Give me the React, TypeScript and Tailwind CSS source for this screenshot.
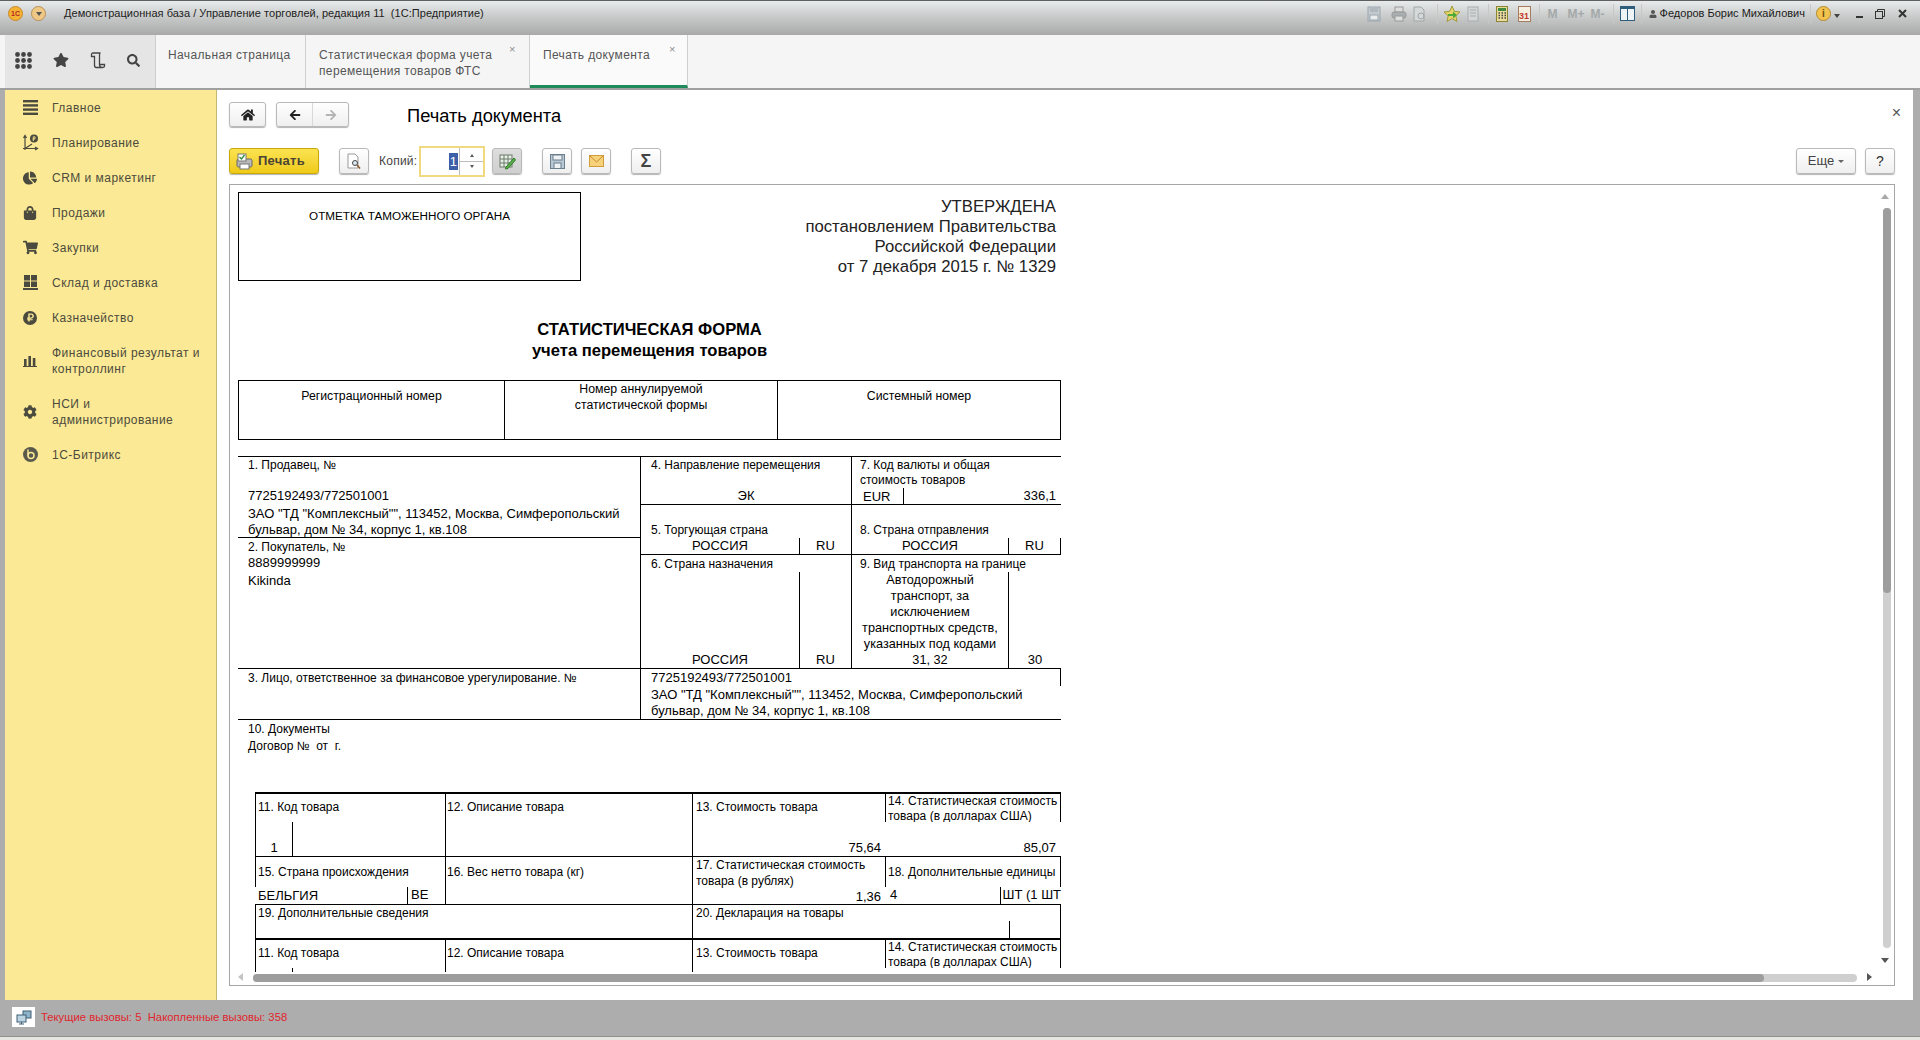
import type { ReactNode } from 'react'
import {
  FaChartPie,
  FaCog,
  FaHome,
  FaArrowLeft,
  FaArrowRight,
  FaRubleSign,
  FaSearch,
  FaShoppingBag,
  FaShoppingCart,
  FaStar,
  FaUser,
} from 'react-icons/fa'

const Line = ({ children, className = '' }: { children?: ReactNode; className?: string }) => (
  <div className={`h-4 leading-4 whitespace-nowrap ${className}`}>{children}</div>
)

const BarsIcon = () => (
  <svg width="15" height="15" viewBox="0 0 15 15" fill="#4a4a3e">
    <rect x="0" y="0" width="15" height="2.4" />
    <rect x="0" y="4.2" width="15" height="2.4" />
    <rect x="0" y="8.4" width="15" height="2.4" />
    <rect x="0" y="12.6" width="15" height="2.4" />
  </svg>
)

const PlanIcon = () => (
  <svg width="17" height="17" viewBox="0 0 17 17" fill="none" stroke="#4a4a3e" strokeWidth="1.2">
    <path d="M3 16V2M1.5 4L3 1.5L4.5 4M1 14.5H15M13 13L15.5 14.5L13 16M3 14.5L10 10" />
    <circle cx="12" cy="4.5" r="4" fill="#4a4a3e" stroke="none" />
    <path d="M11.3 7V2.8H13V5H10.6" stroke="#fbe995" strokeWidth="0.9" />
  </svg>
)

const WarehouseIcon = () => (
  <svg width="15" height="15" viewBox="0 0 15 15" fill="#4a4a3e">
    <rect x="1" y="0" width="6" height="5.5" />
    <rect x="8" y="0" width="6" height="5.5" />
    <rect x="1" y="6.5" width="6" height="5.5" />
    <rect x="8" y="6.5" width="6" height="5.5" />
    <rect x="0" y="13" width="15" height="2" />
  </svg>
)

const ChartIcon = () => (
  <svg width="14" height="12" viewBox="0 0 14 12" fill="#4a4a3e">
    <rect x="1" y="4" width="2.6" height="7" />
    <rect x="5.4" y="1" width="2.6" height="10" />
    <rect x="9.8" y="3" width="2.6" height="8" />
    <rect x="0" y="11" width="14" height="1" />
  </svg>
)

const BitrixIcon = () => (
  <svg width="15" height="15" viewBox="0 0 15 15">
    <circle cx="7.5" cy="7.5" r="7.5" fill="#5a5a4c" />
    <circle cx="8" cy="8.5" r="3" fill="none" stroke="#fbe995" strokeWidth="1.5" />
    <path d="M5 2.5V8.5" stroke="#fbe995" strokeWidth="1.5" />
  </svg>
)

const RubleBadge = () => (
  <span className="w-[14px] h-[14px] rounded-full bg-[#4a4a3e] flex items-center justify-center">
    <FaRubleSign size={9} color="#fbe995" />
  </span>
)

const navItems: { label: ReactNode; icon: ReactNode; h: string }[] = [
  { label: 'Главное', icon: <BarsIcon />, h: 'h-[35px]' },
  { label: 'Планирование', icon: <PlanIcon />, h: 'h-[35px]' },
  { label: 'CRM и маркетинг', icon: <FaChartPie size={14} color="#4a4a3e" />, h: 'h-[35px]' },
  { label: 'Продажи', icon: <FaShoppingBag size={14} color="#4a4a3e" />, h: 'h-[35px]' },
  { label: 'Закупки', icon: <FaShoppingCart size={15} color="#4a4a3e" />, h: 'h-[35px]' },
  { label: 'Склад и доставка', icon: <WarehouseIcon />, h: 'h-[35px]' },
  { label: 'Казначейство', icon: <RubleBadge />, h: 'h-[35px]' },
  {
    label: (
      <>
        Финансовый результат и
        <br />
        контроллинг
      </>
    ),
    icon: <ChartIcon />,
    h: 'h-[51px]',
  },
  {
    label: (
      <>
        НСИ и
        <br />
        администрирование
      </>
    ),
    icon: <FaCog size={14} color="#4a4a3e" />,
    h: 'h-[51px]',
  },
  { label: '1С-Битрикс', icon: <BitrixIcon />, h: 'h-[35px]' },
]

const TitleSep = () => <span className="w-px h-[20px] bg-[#c6c8c8]" />

const TitleBar = () => (
  <div className="h-[35px] shrink-0 flex items-start border-t border-[#5f5f5f] bg-linear-to-b from-[#e8ebeb] via-[#c6c8c8] to-[#a9a9a9] text-[11px] text-[#222]">
    <div className="flex items-center h-[25px] pl-[8px]">
      <span className="w-[15px] h-[15px] rounded-full bg-[#f5b335] border border-[#c9862a] flex items-center justify-center text-[7px] font-bold text-[#b3261e] leading-none">
        1С
      </span>
      <span className="ml-[8px] w-[15px] h-[15px] rounded-full bg-[#f0c886] border border-[#b98f56] flex items-center justify-center">
        <span className="w-0 h-0 border-x-[3px] border-x-transparent border-t-[4px] border-t-[#555]" />
      </span>
      <span className="ml-[8px]">
        <TitleSep />
      </span>
      <span className="ml-[10px] tracking-[0.004em]">Демонстрационная база / Управление торговлей, редакция 11 &nbsp;(1С:Предприятие)</span>
    </div>
    <div className="ml-auto flex items-center h-[25px] pr-[13px]">
      <svg width="14" height="16" viewBox="0 0 14 16" fill="none" stroke="#9aa6ad" className="mr-[10px]">
        <rect x="1" y="1" width="12" height="14" fill="#c3cbcf" />
        <rect x="3" y="9" width="8" height="5" fill="#e8ecec" />
        <path d="M3 3H11M3 5H11" />
      </svg>
      <svg width="16" height="16" viewBox="0 0 16 16" fill="#a9afb1" stroke="#999" className="mr-[6px]">
        <rect x="4" y="1" width="8" height="5" fill="#ddd" />
        <rect x="1" y="6" width="14" height="6" rx="2" />
        <rect x="4" y="10" width="8" height="5" fill="#ddd" />
      </svg>
      <svg width="14" height="16" viewBox="0 0 14 16" fill="none" stroke="#a0a6a8" className="mr-[10px]">
        <path d="M1 1H8L11 4V15H1Z" fill="#d4d8d8" />
        <circle cx="8" cy="10" r="3" />
      </svg>
      <TitleSep />
      <svg width="18" height="18" viewBox="0 0 18 18" className="ml-[5px] mr-[6px]">
        <path d="M9 1L11.3 6.3L17 7L12.8 10.8L14 16.5L9 13.6L4 16.5L5.2 10.8L1 7L6.7 6.3Z" fill="#e7d56a" stroke="#a09a3c" />
        <path d="M5 9H10V6.5L14 10L10 13.5V11H5Z" fill="#4ca93a" />
      </svg>
      <svg width="12" height="16" viewBox="0 0 12 16" fill="#d2d6d6" stroke="#a9adad" className="mr-[9px]">
        <rect x="1" y="1" width="10" height="14" />
        <path d="M3 4H9M3 7H9M3 10H9" />
      </svg>
      <TitleSep />
      <svg width="12" height="16" viewBox="0 0 12 16" className="ml-[7px] mr-[10px]">
        <rect x="0.5" y="0.5" width="11" height="15" fill="#e9dc9b" stroke="#8b8434" />
        <rect x="2" y="2" width="8" height="3" fill="#3f8b3f" />
        <path d="M2.5 7H4M5.5 7H7M8.5 7H10M2.5 9.5H4M5.5 9.5H7M8.5 9.5H10M2.5 12H4M5.5 12H7M8.5 12H10" stroke="#444" strokeWidth="1.4" />
      </svg>
      <span className="w-[13px] h-[16px] border border-[#a57b62] bg-[#f5efe0] text-[9px] leading-[18px] text-center text-[#c0392b] font-bold mr-[8px]">
        31
      </span>
      <TitleSep />
      <span className="ml-[8px] text-[12px] font-bold text-[#a4a8a8]">M</span>
      <span className="ml-[10px] text-[12px] font-bold text-[#a4a8a8]">M+</span>
      <span className="ml-[6px] text-[12px] font-bold text-[#a4a8a8] mr-[8px]">M-</span>
      <TitleSep />
      <svg width="15" height="15" viewBox="0 0 15 15" className="ml-[6px] mr-[6px]">
        <rect x="0.5" y="0.5" width="14" height="14" fill="#eef3f6" stroke="#2f5d7c" />
        <rect x="0.5" y="0.5" width="14" height="2.5" fill="#2f5d7c" />
        <path d="M7.5 1V14" stroke="#2f5d7c" />
      </svg>
      <TitleSep />
      <span className="ml-[7px]">
        <FaUser size={8} color="#555" />
      </span>
      <span className="ml-[3px] mr-[5px] text-[#1a1a1a]">Федоров Борис Михайлович</span>
      <TitleSep />
      <span className="ml-[5px] w-[15px] h-[15px] rounded-full bg-[#f2c44f] border border-[#b68a2b] text-[10px] leading-[13px] text-center font-bold text-[#6b4a12]">
        i
      </span>
      <span className="ml-[3px] w-0 h-0 border-x-[3px] border-x-transparent border-t-[4px] border-t-[#444] mt-[4px]" />
      <span className="ml-[5px] mr-[11px]">
        <TitleSep />
      </span>
      <span className="w-[7px] h-[2px] bg-[#333] mt-[6px] mr-[12px]" />
      <svg width="10" height="10" viewBox="0 0 10 10" fill="none" stroke="#333" className="mr-[13px]">
        <rect x="0.5" y="2.5" width="7" height="7" />
        <path d="M2.5 2.5V0.5H9.5V7.5H7.5" />
      </svg>
      <svg width="9" height="9" viewBox="0 0 9 9" stroke="#333" strokeWidth="2">
        <path d="M1 1L8 8M8 1L1 8" />
      </svg>
    </div>
  </div>
)

const TabsBar = () => (
  <div className="h-[55px] shrink-0 flex pl-[5px] bg-[#f5f5f5] border-b-2 border-[#a0a0a0] text-[12px] leading-4 text-[#555] tracking-[0.03em]">
    <div className="w-[150px] flex items-center gap-[21px] pl-[10px] pb-[3px] bg-[#e5e5e5]">
      <svg width="17" height="17" viewBox="0 0 17 17" fill="#444">
        {[0, 6, 12].flatMap((x) =>
          [0, 6, 12].map((y) => <circle key={`${x}-${y}`} cx={x + 2.5} cy={y + 2.5} r="2.4" />),
        )}
      </svg>
      <FaStar size={16} color="#444" />
      <svg width="16" height="17" viewBox="0 0 16 17" fill="none" stroke="#444" strokeWidth="1.3">
        <path d="M3 1H10.5C9.5 1 9.5 2 9.5 3V12.5C9.5 14 10.5 15.5 12 15.5H6C4.5 15.5 4.5 14 4.5 12.5V4.5H1.5V2.5C1.5 1.5 2 1 3 1Z" />
        <path d="M10 12.5H14.5V14C14.5 15 13.5 15.5 12 15.5" />
      </svg>
      <FaSearch size={13} color="#444" />
    </div>
    <div className="w-[151px] border-x border-[#cfcfcf] pl-[12px] pt-[12px]">Начальная страница</div>
    <div className="relative w-[224px] border-r border-[#cfcfcf] pl-[13px] pt-[12px]">
      <div>Статистическая форма учета</div>
      <div>перемещения товаров ФТС</div>
      <span className="absolute left-[203px] top-[9px] text-[11px] leading-none text-[#8e8e8e]">×</span>
    </div>
    <div className="relative w-[158px] border-r border-[#cfcfcf] pl-[13px] pt-[12px] bg-[#fafafa] border-b-[3px] border-b-[#1f8a5a] h-[53px]">
      Печать документа
      <span className="absolute left-[139px] top-[9px] text-[11px] leading-none text-[#8e8e8e]">×</span>
    </div>
  </div>
)

const Sidebar = () => (
  <div className="w-[212px] shrink-0 bg-[#fbe995] border-r border-[#c4b873] text-[12px] leading-4 text-[#4c4b3d] tracking-[0.04em]">
    {navItems.map((item, i) => (
      <div key={i} className={`flex items-center ${item.h}`}>
        <div className="w-[47px] shrink-0 pl-[3px] flex justify-center">{item.icon}</div>
        <div>{item.label}</div>
      </div>
    ))}
  </div>
)

const toolBtn =
  'h-[26px] flex items-center justify-center rounded-[3px] border border-[#b9b9b9] bg-linear-to-b from-white to-[#efefef] shadow-[0_1px_1px_rgba(0,0,0,0.3)]'

const Toolbar = () => (
  <div className="flex items-center h-[26px] mt-[21px] text-[12px] text-[#444]">
    <div className="w-[90px] h-[26px] flex items-center rounded-[3px] border border-[#c9a90a] bg-linear-to-b from-[#fbe34f] to-[#efca14] shadow-[0_1px_1px_rgba(0,0,0,0.3)] pl-[6px] gap-[5px] font-bold text-[#4a4434] text-[13px] tracking-[0.02em]">
      <svg width="17" height="17" viewBox="0 0 17 17">
        <rect x="1" y="6" width="15" height="8" rx="1.5" fill="#b9b9b9" stroke="#666" />
        <rect x="2" y="1" width="8" height="7" fill="#fff" stroke="#777" />
        <path d="M3.5 4L5.5 6L8.5 2" stroke="#2f8a3a" strokeWidth="1.3" fill="none" />
        <rect x="4" y="11" width="9" height="5" fill="#fff" stroke="#777" />
      </svg>
      Печать
    </div>
    <div className={`${toolBtn} w-[30px] ml-[20px]`}>
      <svg width="14" height="17" viewBox="0 0 14 17" fill="none" stroke="#9a9a9a">
        <path d="M1 1H8L11 4V15H1Z" fill="#fff" />
        <circle cx="8" cy="10" r="2.5" fill="#dbe9f2" stroke="#444" />
        <path d="M10 12L13 15.5" stroke="#8a5a2b" strokeWidth="1.6" />
      </svg>
    </div>
    <span className="ml-[10px] w-[40px] tracking-[0.02em]">Копий:</span>
    <div className="h-[31px] w-[66px] flex items-center border-2 border-[#f0d97f] bg-white">
      <div className="w-[37px] flex justify-end">
        <span className="bg-[#3d5fa8] text-white text-[13px] leading-[17px] px-[1px]">1</span>
      </div>
      <div className="ml-[1px] flex-1 h-full border-l border-[#bdbdbd] flex flex-col items-center justify-center gap-[8px] relative">
        <span className="w-0 h-0 border-x-[2px] border-x-transparent border-b-[3px] border-b-[#555]" />
        <span className="absolute left-0 right-0 top-[13px] h-px bg-[#bdbdbd]" />
        <span className="w-0 h-0 border-x-[2px] border-x-transparent border-t-[3px] border-t-[#555]" />
      </div>
    </div>
    <div className={`${toolBtn} w-[30px] ml-[7px] from-[#dedede]! to-[#cfcfcf]!`}>
      <svg width="17" height="17" viewBox="0 0 17 17" fill="none">
        <rect x="1" y="2" width="12" height="12" fill="#e7efe7" stroke="#6a7a6a" />
        <path d="M1 6H13M1 10H13M5 2V14M9 2V14" stroke="#6a7a6a" />
        <path d="M7 14L15 5L16.5 7L9 15.5L6.5 16Z" fill="#5bb04a" stroke="#2f7a2a" />
      </svg>
    </div>
    <div className={`${toolBtn} w-[30px] ml-[20px]`}>
      <svg width="15" height="15" viewBox="0 0 15 15" stroke="#6b7f8d">
        <rect x="0.5" y="0.5" width="14" height="14" fill="#b9c8d2" />
        <rect x="3" y="1" width="9" height="5" fill="#eef2f4" />
        <rect x="4" y="9" width="7" height="5.5" fill="#eef2f4" />
      </svg>
    </div>
    <div className={`${toolBtn} w-[30px] ml-[9px]`}>
      <svg width="15" height="12" viewBox="0 0 15 12">
        <rect x="0.5" y="0.5" width="14" height="11" fill="#f6d27a" stroke="#d19a3a" />
        <path d="M1 1L7.5 7L14 1" fill="none" stroke="#c98a2a" />
      </svg>
    </div>
    <div className={`${toolBtn} w-[30px] ml-[20px] text-[18px] font-bold text-[#444]`}>Σ</div>
    <div className={`${toolBtn} w-[60px] ml-auto text-[13px] text-[#444] gap-[4px]`}>
      Еще
      <span className="w-0 h-0 border-x-[3px] border-x-transparent border-t-[3px] border-t-[#666]" />
    </div>
    <div className={`${toolBtn} w-[30px] ml-[9px] text-[14px] text-[#333]`}>?</div>
  </div>
)

const GoodsTopRow = () => (
  <div className="flex h-[62px] border-t-2 border-b border-black box-content">
    <div className="w-[190px] border-l border-black flex flex-col">
      <Line className="mt-[5px] pl-[2px]">11. Код товара</Line>
      <div className="mt-auto w-[37px] h-[34px] border-r border-black flex items-end justify-center">
        <Line className="text-[13px]">1</Line>
      </div>
    </div>
    <div className="w-[247px] border-l border-black pl-[1px]">
      <Line className="mt-[5px]">12. Описание товара</Line>
    </div>
    <div className="w-[193px] border-l border-black pl-[3px] flex flex-col">
      <Line className="mt-[5px]">13. Стоимость товара</Line>
      <Line className="mt-auto text-right pr-[4px] text-[13px]">75,64</Line>
    </div>
    <div className="w-[176px] flex flex-col">
      <div className="h-[28px] border-x border-black pl-[2px] overflow-hidden leading-[14px] whitespace-nowrap">
        <div>14. Статистическая стоимость</div>
        <div className="mt-px">товара (в долларах США)</div>
      </div>
      <Line className="mt-auto text-right pr-[5px] text-[13px]">85,07</Line>
    </div>
  </div>
)

const GoodsDetails = () => (
  <>
    <div className="flex h-[47px] border-b border-black box-content">
      <div className="w-[190px] flex flex-col">
        <div className="h-[30px] border-l border-black pl-[2px] pt-[7px]">
          <Line>15. Страна происхождения</Line>
        </div>
        <div className="flex h-[17px]">
          <Line className="w-[152px] pl-[3px] mt-px text-[13px]">БЕЛЬГИЯ</Line>
          <Line className="border-l border-black pl-[3px] h-[17px] text-[13px]">BE</Line>
        </div>
      </div>
      <div className="w-[247px] border-l border-black pl-[1px] pt-[7px]">
        <Line>16. Вес нетто товара (кг)</Line>
      </div>
      <div className="w-[193px] border-l border-black pl-[3px] flex flex-col">
        <Line>17. Статистическая стоимость</Line>
        <Line>товара (в рублях)</Line>
        <Line className="mt-auto text-right pr-[4px] text-[13px]">1,36</Line>
      </div>
      <div className="w-[176px] flex flex-col">
        <div className="h-[30px] border-x border-black pl-[2px] pt-[7px] overflow-hidden">
          <Line>18. Дополнительные единицы</Line>
        </div>
        <div className="flex h-[17px] overflow-hidden">
          <Line className="w-[115px] pl-[5px] text-[13px]">4</Line>
          <Line className="border-l border-black pl-[2px] h-[17px] text-[13px]">ШТ (1 ШТ</Line>
        </div>
      </div>
    </div>
    <div className="flex h-[33px]">
      <div className="w-[437px] border-l border-black pl-[2px]">
        <Line>19. Дополнительные сведения</Line>
      </div>
      <div className="w-[369px] border-x border-black flex flex-col">
        <Line className="pl-[3px]">20. Декларация на товары</Line>
        <div className="ml-[316px] mt-auto h-[17px] border-l border-black" />
      </div>
    </div>
  </>
)

const Document = () => (
  <div className="w-[823px] h-[780px] overflow-hidden mt-[7px] ml-[8px] text-[12px] leading-4 text-black">
    <div className="flex justify-between h-[89px]">
      <div className="w-[343px] h-[89px] border border-black text-center pt-[15px] text-[11.7px]">ОТМЕТКА ТАМОЖЕННОГО ОРГАНА</div>
      <div className="pt-[5px] pr-[5px] text-right text-[16.7px] leading-[20px] text-[#222]">
        <div>УТВЕРЖДЕНА</div>
        <div>постановлением Правительства</div>
        <div>Российской Федерации</div>
        <div>от 7 декабря 2015 г. № 1329</div>
      </div>
    </div>
    <div className="mt-[38px] text-center font-bold text-[16.6px] leading-[21px]">
      <div>СТАТИСТИЧЕСКАЯ ФОРМА</div>
      <div>учета перемещения товаров</div>
    </div>
    <div className="flex h-[60px] mt-[19px] border border-black text-center text-[12.3px]">
      <div className="w-[265px] pt-[7px]">Регистрационный номер</div>
      <div className="w-[273px] border-l border-black">
        <div>Номер аннулируемой</div>
        <div>статистической формы</div>
      </div>
      <div className="flex-1 border-l border-black pt-[7px]">Системный номер</div>
    </div>

    <div className="mt-[16px] flex h-[211px] border-t border-black box-content">
      <div className="w-[402px] flex flex-col">
        <div className="h-[81px] border-b border-black pl-[10px]">
          <Line>1. Продавец, №</Line>
          <Line className="mt-[15px] text-[13px]">7725192493/772501001</Line>
          <Line className="mt-[2px] text-[13px]">ЗАО "ТД "Комплексный"", 113452, Москва, Симферопольский</Line>
          <Line className="text-[13px]">бульвар, дом № 34, корпус 1, кв.108</Line>
        </div>
        <div className="pl-[10px]">
          <Line className="mt-px">2. Покупатель, №</Line>
          <Line className="text-[13px]">8889999999</Line>
          <Line className="mt-[2px] text-[13px]">Kikinda</Line>
        </div>
      </div>
      <div className="w-[211px] border-l border-black flex flex-col">
        <div className="h-[48px] border-b border-black">
          <Line className="pl-[10px]">4. Направление перемещения</Line>
          <Line className="mt-[15px] text-center text-[13px]">ЭК</Line>
        </div>
        <div className="h-[50px] border-b border-black pt-[17px]">
          <Line className="pl-[10px]">5. Торгующая страна</Line>
          <div className="flex h-4">
            <Line className="w-[158px] text-center text-[13px]">РОССИЯ</Line>
            <Line className="flex-1 border-l border-black text-center text-[13px]">RU</Line>
          </div>
        </div>
        <div className="flex-1 flex flex-col pt-px">
          <Line className="pl-[10px]">6. Страна назначения</Line>
          <div className="flex-1 flex">
            <Line className="w-[158px] h-auto flex items-end justify-center text-[13px]">РОССИЯ</Line>
            <Line className="flex-1 h-auto border-l border-black flex items-end justify-center text-[13px]">RU</Line>
          </div>
        </div>
      </div>
      <div className="w-[210px] border-l border-black flex flex-col">
        <div className="h-[48px] border-b border-black flex flex-col">
          <Line className="pl-[8px]">7. Код валюты и общая</Line>
          <Line className="pl-[8px] -mt-px">стоимость товаров</Line>
          <div className="flex mt-auto h-[17px]">
            <Line className="w-[51px] pl-[11px] mt-px text-[13px]">EUR</Line>
            <Line className="flex-1 h-[17px] border-l border-black text-right pr-[5px] text-[13px]">336,1</Line>
          </div>
        </div>
        <div className="h-[50px] border-b border-black pt-[17px]">
          <Line className="pl-[8px]">8. Страна отправления</Line>
          <div className="flex h-4">
            <Line className="w-[156px] text-center text-[13px]">РОССИЯ</Line>
            <Line className="flex-1 border-x border-black text-center text-[13px]">RU</Line>
          </div>
        </div>
        <div className="flex-1 flex flex-col pt-px">
          <Line className="pl-[8px]">9. Вид транспорта на границе</Line>
          <div className="flex-1 flex">
            <div className="w-[156px] flex flex-col justify-end text-center text-[12.7px]">
              <Line>Автодорожный</Line>
              <Line>транспорт, за</Line>
              <Line>исключением</Line>
              <Line>транспортных средств,</Line>
              <Line>указанных под кодами</Line>
              <Line>31, 32</Line>
            </div>
            <Line className="flex-1 h-auto border-l border-black flex items-end justify-center text-[13px]">30</Line>
          </div>
        </div>
      </div>
    </div>
    <div className="flex h-[50px] border-y border-black box-content">
      <div className="w-[402px] pl-[10px]">
        <Line className="mt-px">3. Лицо, ответственное за финансовое урегулирование. №</Line>
      </div>
      <div className="flex-1 border-l border-black">
        <div className="h-[17px] border-r border-black pl-[10px] pt-px">
          <Line className="text-[13px]">7725192493/772501001</Line>
        </div>
        <Line className="pl-[10px] mt-px text-[13px]">ЗАО "ТД "Комплексный"", 113452, Москва, Симферопольский</Line>
        <Line className="pl-[10px] text-[13px]">бульвар, дом № 34, корпус 1, кв.108</Line>
      </div>
    </div>
    <div className="pl-[10px]">
      <Line className="mt-px">10. Документы</Line>
      <Line className="mt-px">Договор № &nbsp;от &nbsp;г.</Line>
    </div>

    <div className="ml-[17px] mt-[38px] w-[806px]">
      <GoodsTopRow />
      <GoodsDetails />
      <GoodsTopRow />
    </div>
  </div>
)

const Scrollbars = () => (
  <>
    <span className="absolute right-[5px] top-[9px] w-0 h-0 border-x-[4px] border-x-transparent border-b-[5px] border-b-[#a8a8a8]" />
    <div className="absolute right-[3px] top-[23px] w-[8px] h-[740px] rounded-full bg-[#cfcfcf]">
      <div className="w-full h-[385px] rounded-full bg-[#9d9d9d]" />
    </div>
    <span className="absolute right-[5px] bottom-[22px] w-0 h-0 border-x-[4px] border-x-transparent border-t-[5px] border-t-[#555]" />
    <span className="absolute left-[8px] bottom-[4px] w-0 h-0 border-y-[4px] border-y-transparent border-r-[5px] border-r-[#c4c4c4]" />
    <div className="absolute left-[23px] bottom-[3px] w-[1604px] h-[8px] rounded-full bg-[#cfcfcf]">
      <div className="h-full w-[1511px] rounded-full bg-[#9d9d9d]" />
    </div>
    <span className="absolute right-[22px] bottom-[4px] w-0 h-0 border-y-[4px] border-y-transparent border-l-[5px] border-l-[#555]" />
  </>
)

const Content = () => (
  <div className="flex-1 bg-white pl-[12px] pr-[18px] pt-[12px] relative">
    <div className="flex items-center h-[25px]">
      <div className={`${toolBtn} h-[25px]! w-[37px]`}>
        <FaHome size={14} color="#222" />
      </div>
      <div className={`${toolBtn} h-[25px]! w-[73px] ml-[10px]`}>
        <div className="flex-1 h-full border-r border-[#d8d8d8] flex items-center justify-center">
          <FaArrowLeft size={12} color="#222" />
        </div>
        <div className="flex-1 flex items-center justify-center">
          <FaArrowRight size={12} color="#b4b4b4" />
        </div>
      </div>
      <div className="ml-[58px] pt-[2px] text-[18.3px] text-black">Печать документа</div>
    </div>
    <span className="absolute right-[12px] top-[15px] text-[16px] leading-4 text-[#555]">×</span>
    <Toolbar />
    <div className="relative mt-[10px] h-[802px] border border-[#a6a6a6]">
      <Document />
      <Scrollbars />
    </div>
  </div>
)

export default function App() {
  return (
    <div className="w-[1920px] h-[1040px] overflow-hidden flex flex-col bg-[#adadad] font-['Liberation_Sans',Arial,sans-serif]">
      <TitleBar />
      <TabsBar />
      <div className="flex-1 flex pl-[5px] pr-[7px] min-h-0">
        <Sidebar />
        <Content />
      </div>
      <div className="h-[36px] shrink-0 flex items-center pl-[12px] pb-[2px] text-[11.3px] text-[#e0262e]">
        <div className="w-[23px] h-[20px] bg-white flex items-center justify-center mr-[6px]">
          <svg width="16" height="15" viewBox="0 0 16 15">
            <rect x="7" y="1" width="8" height="7" fill="#8fb3c9" stroke="#3f5f75" />
            <rect x="1" y="5" width="9" height="7" fill="#bcd4e2" stroke="#3f5f75" />
            <path d="M3 14H8M5.5 12V14" stroke="#3f5f75" />
          </svg>
        </div>
        Текущие вызовы: 5 &nbsp;Накопленные вызовы: 358
      </div>
      <div className="h-[4px] shrink-0 border-t border-[#8f8f8f] bg-[#e6e6e0]" />
    </div>
  )
}
